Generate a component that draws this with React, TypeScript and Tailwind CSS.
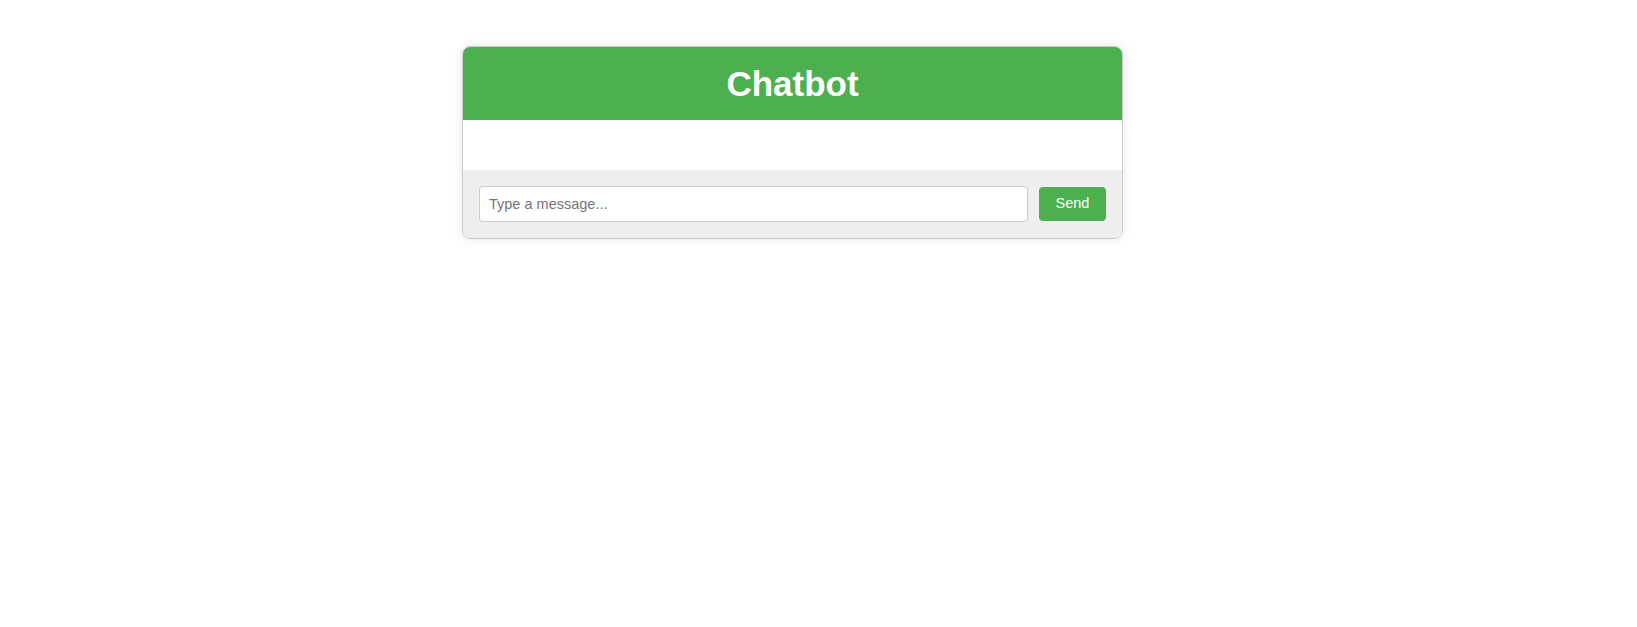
import { useState } from 'react';

const App = () => {
    const [text, setText] = useState('');

    return (
        <div className="min-h-screen bg-white pt-[46px] font-['Liberation_Sans',Arial,sans-serif]">
            <div className="ml-[462px] w-[661px] border border-[#ccc] rounded-[8px] overflow-hidden shadow-[0_0_10px_rgba(0,0,0,0.1)]">
                <div className="h-[73px] bg-[#4CAF50] flex items-center justify-center">
                    <h1 className="text-[35px] font-bold text-white leading-none">Chatbot</h1>
                </div>
                <div className="h-[50px] bg-white"></div>
                <div className="flex items-center gap-[11px] bg-[#eee] px-[16px] h-[68px]">
                    <input
                        type="text"
                        value={text}
                        onChange={(e) => setText(e.target.value)}
                        placeholder="Type a message..."
                        className="flex-1 h-[36px] border border-[#ccc] rounded-[4px] bg-white px-[9px] text-[14.5px] text-[#222] placeholder:text-[#757575] outline-none"
                    />
                    <button className="h-[34px] w-[67px] bg-[#4CAF50] text-white text-[14.5px] rounded-[4px]">
                        Send
                    </button>
                </div>
            </div>
        </div>
    );
};

export default App;
